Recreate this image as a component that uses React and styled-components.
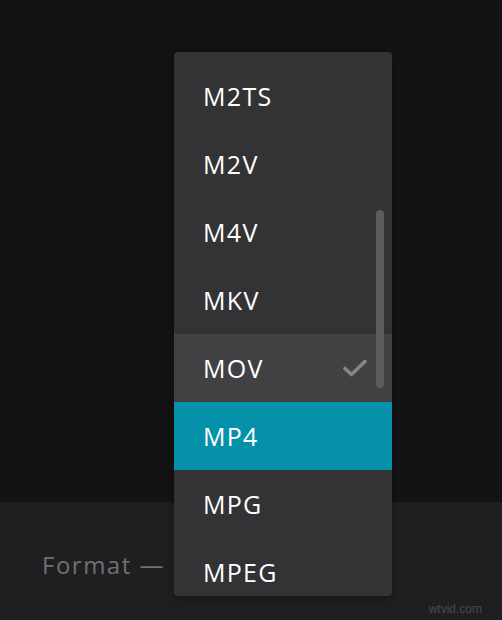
import React from "react";
import styled, { createGlobalStyle } from "styled-components";

const Global = createGlobalStyle`
  html, body { margin: 0; padding: 0; background: #131315; }
  body { font-family: "Open Sans", "Noto Sans", sans-serif; }
`;

const Page = styled.div`
  position: relative;
  width: 502px;
  height: 620px;
  overflow: hidden;
  display: flex;
  flex-direction: column;
`;

const Stage = styled.div`
  height: 502px;
  background: #131315;
`;

const Footer = styled.div`
  flex: 1;
  background: #1f1f21;
  display: flex;
  align-items: center;
  padding: 6px 0 0 42px;
  position: relative;
`;

const Label = styled.span`
  font-size: 24px;
  font-weight: 400;
  color: #707072;
  letter-spacing: 1.5px;
`;

const Watermark = styled.span`
  position: absolute;
  right: 20px;
  bottom: 4px;
  font-family: "Liberation Sans", Arial, sans-serif;
  font-size: 12px;
  color: #4a4a4c;
`;

const Menu = styled.div`
  position: absolute;
  left: 174px;
  top: 52px;
  width: 218px;
  height: 544px;
  background: #333335;
  border-radius: 4px;
  overflow: hidden;
  box-shadow: 0 2px 8px rgba(0, 0, 0, 0.35);
`;

const List = styled.ul`
  list-style: none;
  margin: 0;
  padding: 10px 0 0;
`;

const Item = styled.li`
  height: 68px;
  display: flex;
  align-items: center;
  justify-content: space-between;
  padding: 0 25px 0 29px;
  font-size: 25px;
  letter-spacing: 1.3px;
  color: #ffffff;
  background: ${(p) => (p.$active ? "#0691aa" : p.$selected ? "#414143" : "transparent")};
`;

const Scrollbar = styled.div`
  position: absolute;
  left: 202px;
  top: 158px;
  width: 8px;
  height: 178px;
  border-radius: 4px;
  background: #5c5c5e;
`;

const Check = () => (
  <svg width="24" height="18" viewBox="0 0 24 18" fill="none">
    <path d="M2 9.5 L8.5 15.5 L22 2.5" stroke="#868688" strokeWidth="3.6" strokeLinecap="round" strokeLinejoin="round" />
  </svg>
);

const formats = ["M2TS", "M2V", "M4V", "MKV", "MOV", "MP4", "MPG", "MPEG"];

export default function App() {
  return (
    <>
      <Global />
      <Page>
        <Stage />
        <Footer>
          <Label>Format —</Label>
          <Watermark>wtvid.com</Watermark>
        </Footer>
        <Menu>
          <List>
            {formats.map((f) => (
              <Item key={f} $selected={f === "MOV"} $active={f === "MP4"}>
                <span>{f}</span>
                {f === "MOV" && <Check />}
              </Item>
            ))}
          </List>
          <Scrollbar />
        </Menu>
      </Page>
    </>
  );
}
